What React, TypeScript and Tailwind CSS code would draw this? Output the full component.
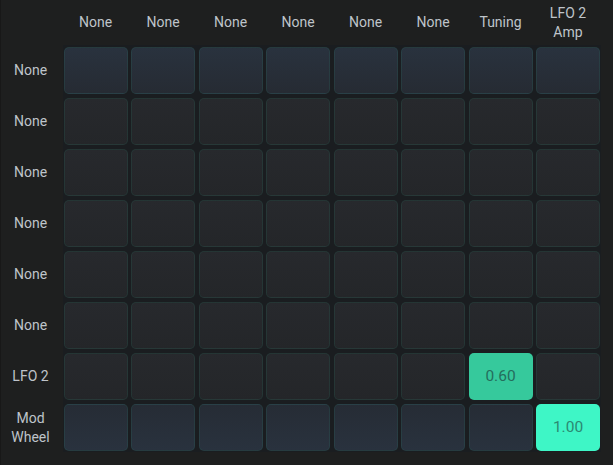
import React from 'react'

const cols = ['None', 'None', 'None', 'None', 'None', 'None', 'Tuning', 'LFO 2 Amp']
const rows = ['None', 'None', 'None', 'None', 'None', 'None', 'LFO 2', 'Mod Wheel']

// amounts keyed by "row-col"
const amounts: Record<string, { value: string; cls: string }> = {
    '6-6': { value: '0.60', cls: 'bg-[#36c99c] text-[#246e5c]' },
    '7-7': { value: '1.00', cls: 'bg-[#3ef6c6] text-[#2b8a72]' },
}

const rowTone = (r: number) => {
    if (r === 0) return 'bg-gradient-to-b from-[#29323e] to-[#262b33]'
    if (r === 7) return 'bg-gradient-to-b from-[#262c35] to-[#29323e]'
    return 'bg-gradient-to-b from-[#27292d] to-[#242629]'
}

// labels wrap onto two lines the way the original does
const split: Record<string, string[]> = {
    'LFO 2 Amp': ['LFO 2', 'Amp'],
    'Mod Wheel': ['Mod', 'Wheel'],
}

const Label = ({ text }: { text: string }) => {
    const lines = split[text] ?? [text]
    return (
        <div className="flex flex-col items-center justify-center text-center text-[14px] leading-[19px] text-[#bfc4ca]">
            {lines.map((l, i) => (
                <span key={i}>{l}</span>
            ))}
        </div>
    )
}

const App = () => {
    return (
        <div
            className="w-[613px] h-[465px] bg-[#1e1f1f] border-l border-[#181818] overflow-hidden"
            style={{ fontFamily: 'Roboto, "Liberation Sans", sans-serif' }}
        >
            <div className="flex">
                {/* row labels */}
                <div className="w-[59px] flex flex-col gap-1 pt-[47px]">
                    {rows.map((r, i) => (
                        <div key={i} className="h-[47px] flex items-center justify-center">
                            <Label text={r} />
                        </div>
                    ))}
                </div>

                <div className="flex flex-col pl-[2.5px]">
                    {/* column headers */}
                    <div className="h-[45px] pl-[1px] grid grid-cols-[repeat(8,64px)] gap-x-[3.5px]">
                        {cols.map((c, i) => (
                            <Label key={i} text={c} />
                        ))}
                    </div>

                    {/* matrix */}
                    <div className="bg-[#1a1d20] p-[1px] pt-[2px] grid grid-cols-[repeat(8,64px)] grid-rows-[repeat(8,47px)] gap-x-[3.5px] gap-y-1">
                        {rows.map((_, r) =>
                            cols.map((_, c) => {
                                const a = amounts[`${r}-${c}`]
                                return (
                                    <div
                                        key={`${r}-${c}`}
                                        className={`rounded-[5px] border flex items-center justify-center text-[15.5px] ${
                                            a ? `${a.cls} border-transparent` : `${rowTone(r)} border-[#2dd4aa]/[0.09]`
                                        }`}
                                    >
                                        {a?.value}
                                    </div>
                                )
                            })
                        )}
                    </div>
                </div>
            </div>
        </div>
    )
}

export default App
